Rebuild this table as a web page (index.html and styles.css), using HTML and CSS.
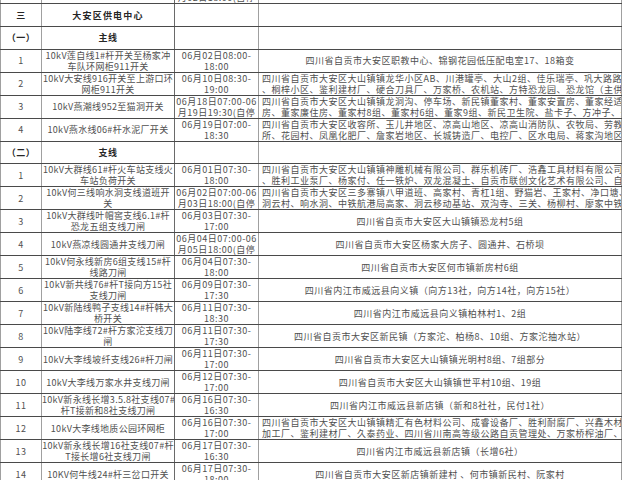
FILE: index.html
```html
<!DOCTYPE html>
<html lang="zh-CN">
<head>
<meta charset="utf-8">
<title>停电计划</title>
<link rel="stylesheet" href="styles.css">
</head>
<body>
<div class="view">
<table class="sheet">
<colgroup>
<col class="c-no"><col class="c-dev"><col class="c-time"><col class="c-area">
</colgroup>
<tbody>
<tr class="partial">
<td></td><td></td>
<td><div class="cell">06月01日08:00-06<br>月02日18:00(自停<br>电)</div></td>
<td></td>
</tr>
<tr class="head">
<td><div class="cell">三</div></td>
<td><div class="cell wide">大安区供电中心</div></td>
<td></td><td></td>
</tr>
<tr class="head">
<td><div class="cell">（一）</div></td>
<td><div class="cell">主线</div></td>
<td></td><td></td>
</tr>
<tr>
<td><div class="cell">1</div></td>
<td><div class="cell dev">10kV莲自线1#杆开关至杨家冲<br>车队环网柜911开关</div></td>
<td><div class="cell">06月02日08:00-<br>18:00</div></td>
<td><div class="cell">四川省自贡市大安区职教中心、锦钢花园低压配电室17、18箱变</div></td>
</tr>
<tr>
<td><div class="cell">2</div></td>
<td><div class="cell dev">10kV大安线916开关至上游口环<br>网柜911开关</div></td>
<td><div class="cell">06月10日08:30-<br>19:00</div></td>
<td><div class="cell long"><span>四川省自贡市大安区大山镇镇龙华小区AB、川港罐亭、大山2组、佳乐瑞亭、巩大路路灯</span><span>、桐梓小区、鉴利建材厂、硬合刀具厂、万家桥、农机站、方特恐龙园、恐龙馆（主供</span><span>电）</span></div></td>
</tr>
<tr>
<td><div class="cell">3</div></td>
<td><div class="cell dev">10kV燕潮线952至猫洞开关</div></td>
<td><div class="cell">06月18日07:00-06<br>月19日19:30(自停<br>电)</div></td>
<td><div class="cell long"><span>四川省自贡市大安区大山镇镇龙洞沟、停车场、新民镇董家村、董家安置房、董家经适</span><span>房、董家廉住房、董家村8组、董家村6组、董家9组、新民卫生院、盐卡子、方冲子、盐</span><span>井村</span></div></td>
</tr>
<tr>
<td><div class="cell">4</div></td>
<td><div class="cell dev">10kV燕水线06#杆水泥厂开关</div></td>
<td><div class="cell">06月19日07:00-<br>18:30</div></td>
<td><div class="cell long"><span>四川省自贡市大安区收容所、玉儿井地区、凉高山地区、凉高山消防队、农牧局、劳教</span><span>所、花园村、凤凰化肥厂、詹家岩地区、长城铸造厂、电控厂、区水电局、蒋家沟地区</span></div></td>
</tr>
<tr class="head">
<td><div class="cell">（二）</div></td>
<td><div class="cell">支线</div></td>
<td></td><td></td>
</tr>
<tr>
<td><div class="cell">1</div></td>
<td><div class="cell dev">10kV大群线61#杆火车站支线火<br>车站负荷开关</div></td>
<td><div class="cell">06月01日07:30-<br>18:00</div></td>
<td><div class="cell long"><span>四川省自贡市大安区大山镇镇神雕机械有限公司、群乐机砖厂、浩鑫工具材料有限公司</span><span>、胜利工业泵厂、杨家付、任一铁炉、双龙混凝土、自贡市联创文化艺术有限公司、自</span><span>贡市大安区</span></div></td>
</tr>
<tr>
<td><div class="cell">2</div></td>
<td><div class="cell dev">10kV何三线响水洞支线道班开<br>关</div></td>
<td><div class="cell">06月02日07:00-06<br>月03日18:00(自停<br>电)</div></td>
<td><div class="cell long"><span>四川省自贡市大安区三多寨镇八甲道班、高家村、青杠1组、野猫岩、王家村、净口塘、</span><span>洞云村、响水洞、中铁航港局高家、洞云移动基站、双沟寺、三关、杨柳村、廖家中铁</span></div></td>
</tr>
<tr>
<td><div class="cell">3</div></td>
<td><div class="cell dev">10kV大群线叶帽窖支线6.1#杆<br>恐龙五组支线刀闸</div></td>
<td><div class="cell">06月03日07:30-<br>17:00</div></td>
<td><div class="cell">四川省自贡市大安区大山镇镇恐龙村5组</div></td>
</tr>
<tr>
<td><div class="cell">4</div></td>
<td><div class="cell dev">10kV燕凉线圆通井支线刀闸</div></td>
<td><div class="cell">06月04日07:00-06<br>月05日18:00(自停<br>电)</div></td>
<td><div class="cell">四川省自贡市大安区杨家大房子、圆通井、石桥坝</div></td>
</tr>
<tr>
<td><div class="cell">5</div></td>
<td><div class="cell dev">10kV何永线新房6组支线15#杆<br>线路刀闸</div></td>
<td><div class="cell">06月04日07:30-<br>18:00</div></td>
<td><div class="cell">四川省自贡市大安区何市镇新房村6组</div></td>
</tr>
<tr>
<td><div class="cell">6</div></td>
<td><div class="cell dev">10kV新共线76#杆T接向方15社<br>支线刀闸</div></td>
<td><div class="cell">06月09日07:30-<br>17:30</div></td>
<td><div class="cell">四川省内江市威远县向义镇（向方13社，向方14社，向方15社）</div></td>
</tr>
<tr>
<td><div class="cell">7</div></td>
<td><div class="cell dev">10kV新陆线鸭子支线14#杆韩大<br>桥开关</div></td>
<td><div class="cell">06月11日07:30-<br>18:30</div></td>
<td><div class="cell">四川省内江市威远县向义镇柏林村1、2组</div></td>
</tr>
<tr>
<td><div class="cell">8</div></td>
<td><div class="cell dev">10kV陆李线72#杆方家沱支线刀<br>闸</div></td>
<td><div class="cell">06月11日07:30-<br>17:30</div></td>
<td><div class="cell">四川省自贡市大安区新民镇（方家沱、柏杨8、10组、方家沱抽水站）</div></td>
</tr>
<tr>
<td><div class="cell">9</div></td>
<td><div class="cell dev">10kV大李线坡纤支线26#杆刀闸</div></td>
<td><div class="cell">06月11日07:30-<br>17:00</div></td>
<td><div class="cell">四川省自贡市大安区大山镇镇光明村8组、7组部分</div></td>
</tr>
<tr>
<td><div class="cell">10</div></td>
<td><div class="cell dev">10kV大李线万家水井支线刀闸</div></td>
<td><div class="cell">06月12日07:30-<br>17:00</div></td>
<td><div class="cell">四川省自贡市大安区大山镇镇世平村10组、19组</div></td>
</tr>
<tr>
<td><div class="cell">11</div></td>
<td><div class="cell dev">10kV新永线长增3.5.8社支线07#<br>杆T接新和8社支线刀闸</div></td>
<td><div class="cell">06月16日07:30-<br>16:30</div></td>
<td><div class="cell">四川省内江市威远县新店镇（新和8社社，民付1社）</div></td>
</tr>
<tr>
<td><div class="cell">12</div></td>
<td><div class="cell dev">10kV大李线地质公园环网柜</div></td>
<td><div class="cell">06月16日07:30-<br>17:00</div></td>
<td><div class="cell long"><span>四川省自贡市大安区大山镇镇精汇有色材料公司、成睿设备厂、胜利耐腐厂、兴鑫木材</span><span>加工厂、鉴利建材厂、久泰药业、四川省川南高等级公路自贡管理处、万家桥榨油厂、</span></div></td>
</tr>
<tr>
<td><div class="cell">13</div></td>
<td><div class="cell dev">10kV新永线长增16社支线07#杆<br>T接长增6社支线刀闸</div></td>
<td><div class="cell">06月17日07:30-<br>16:30</div></td>
<td><div class="cell">四川省内江市威远县新店镇（长增6社）</div></td>
</tr>
<tr>
<td><div class="cell">14</div></td>
<td><div class="cell dev">10KV何牛线24#杆三岔口开关</div></td>
<td><div class="cell">06月17日07:30-<br>18:00</div></td>
<td><div class="cell">四川省自贡市大安区新店镇新建村 、何市镇新民村、阮家村</div></td>
</tr>
<tr>
<td></td><td></td><td></td><td></td>
</tr>
</tbody>
</table>
</div>
</body>
</html>
```
FILE: styles.css
```css
html, body {
  margin: 0;
  background: #ffffff;
}

body {
  font-family: "Noto Sans CJK SC", "Noto Sans", sans-serif;
  font-size: 9px;
  color: #505050;
}

.view {
  width: 625px;
  height: 480px;
  overflow: hidden;
}

.sheet {
  width: 621px;
  table-layout: fixed;
  border-collapse: collapse;
  margin-top: -19.65px;
  letter-spacing: 0.5px;
}

.c-no { width: 41px; }
.c-dev { width: 133px; }
.c-time { width: 84px; }
.c-area { width: 363px; }

.sheet tr {
  height: 22.65px;
}

.sheet td {
  padding: 0;
  border-top: 1px solid #4a4a4a;
  border-bottom: 1px solid #4a4a4a;
  border-left: 1px solid #a0a0a0;
  border-right: 1px solid #a0a0a0;
  text-align: center;
  vertical-align: middle;
  overflow: hidden;
}

.sheet td:nth-child(2) {
  border-right-color: #6a6a6a;
}

.cell {
  max-height: 22px;
  line-height: 11px;
  white-space: nowrap;
  overflow: hidden;
}

.dev {
  letter-spacing: 0.3px;
}

.long {
  text-align: left;
  padding-left: 3px;
}

.long span {
  display: block;
}

.head .cell {
  font-weight: bold;
  color: #262626;
}

.wide {
  letter-spacing: 1.2px;
}
```
